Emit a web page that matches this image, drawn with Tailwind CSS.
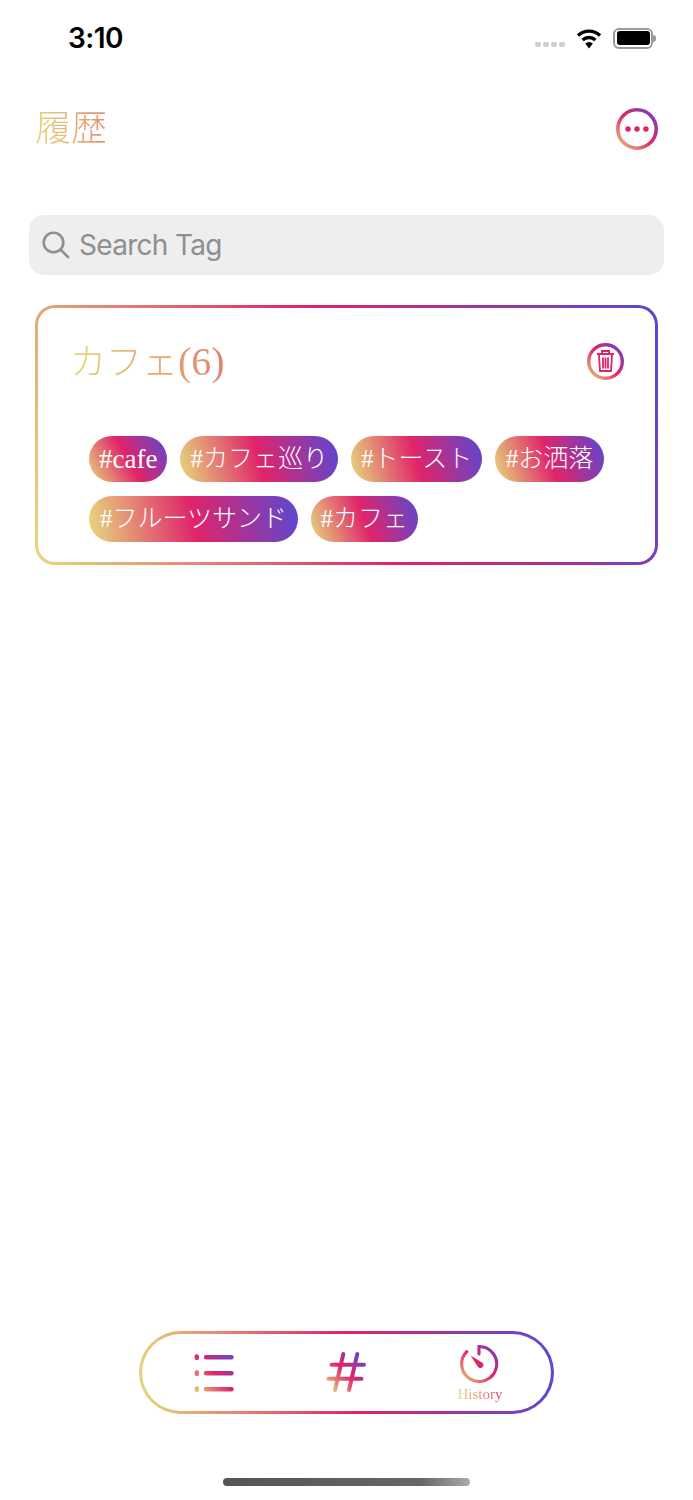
<!DOCTYPE html>
<html lang="ja">

<head>
  <meta charset="UTF-8">
  <meta name="viewport" content="width=device-width, initial-scale=1.0">
  <title>履歴</title>
  <script src="https://cdn.jsdelivr.net/npm/@tailwindcss/browser@4"></script>
</head>

<body class="bg-white">
  <!-- shared gradient for icons -->
  <svg class="absolute w-0 h-0">
    <defs>
      <linearGradient id="grad40" gradientUnits="userSpaceOnUse" x1="0" y1="40" x2="40" y2="0">
        <stop offset="0" stop-color="#e6d97c" />
        <stop offset="0.5" stop-color="#e0246a" />
        <stop offset="1" stop-color="#5a48d2" />
      </linearGradient>
    </defs>
  </svg>

  <div class="w-[693px] h-[1500px] flex flex-col overflow-hidden font-['Liberation_Serif','Noto_Sans_CJK_JP',serif]">
    <!-- Status bar -->
    <div class="h-[76px] shrink-0 flex items-center pl-[68px] pr-[37px]">
      <span class="font-['Inter',sans-serif] font-semibold text-[28px] leading-none text-black tracking-[-0.5px]">3:10</span>
      <div class="ml-auto flex items-center">
        <div class="flex gap-[2px] mt-[13px] mr-[11px]">
          <span class="w-[6px] h-[5px] rounded-[2px] bg-[#cfcfcf]"></span>
          <span class="w-[6px] h-[5px] rounded-[2px] bg-[#cfcfcf]"></span>
          <span class="w-[6px] h-[5px] rounded-[2px] bg-[#cfcfcf]"></span>
          <span class="w-[6px] h-[5px] rounded-[2px] bg-[#cfcfcf]"></span>
        </div>
        <svg class="w-[26px] h-[21px] mr-[11px]" viewBox="0 0 26 21" fill="none" stroke="#000" stroke-width="3.4">
          <path d="M2 7.5 A16 16 0 0 1 24 7.5" />
          <path d="M6.6 12 A9.5 9.5 0 0 1 19.4 12" />
          <path d="M9.2 15.5 L13 20.5 L16.8 15.5 A5.5 5.5 0 0 0 9.2 15.5 Z" fill="#000" stroke="none" />
        </svg>
        <div class="w-[40px] h-[21px] rounded-[6px] border-2 border-[#9a9a9a] p-[1.5px]">
          <div class="w-full h-full rounded-[3px] bg-black"></div>
        </div>
        <div class="w-[3px] h-[7px] rounded-r-full bg-[#9a9a9a]"></div>
      </div>
    </div>

    <!-- Header -->
    <div class="h-[42px] mt-[32px] shrink-0 flex items-center justify-between pl-[35px] pr-[35px]">
      <h1 class="w-[360px] text-[36px] leading-[42px] font-light text-transparent bg-clip-text bg-[linear-gradient(80deg,#e6d97c,#e0246a_50%,#5a48d2)]">履歴</h1>
      <svg class="w-[42px] h-[42px]" viewBox="0 0 40 40" fill="none">
        <circle cx="20" cy="20" r="18.3" stroke="url(#grad40)" stroke-width="3.4" />
        <circle cx="11.5" cy="20" r="2.6" fill="#e0246a" />
        <circle cx="20" cy="20" r="2.6" fill="#e0246a" />
        <circle cx="28.5" cy="20" r="2.6" fill="#e0246a" />
      </svg>
    </div>

    <!-- Search -->
    <div class="mx-[29px] mt-[65px] h-[60px] shrink-0 rounded-[15px] bg-[#eeeeef] flex items-center pl-[13px]">
      <svg class="w-[28px] h-[28px]" viewBox="0 0 28 28" fill="none" stroke="#8e8e93" stroke-width="2.6" stroke-linecap="round">
        <circle cx="11.5" cy="11.5" r="9.8" />
        <path d="M18.8 18.8 L26 26" />
      </svg>
      <span class="ml-[9px] font-['Inter',sans-serif] text-[28px] text-[#8e8e93] tracking-[-0.7px]">Search Tag</span>
    </div>

    <!-- Card -->
    <div class="mx-[35px] mt-[30px] h-[260px] shrink-0 rounded-[20px] p-[3px] bg-[linear-gradient(70deg,#e6d97c,#e0246a_50%,#5a48d2)]">
      <div class="w-full h-full rounded-[17px] bg-white pt-[32px] pl-[32px] pr-[31px]">
        <div class="flex items-center justify-between h-[44px]">
          <h2 class="w-[500px] text-[36px] leading-[44px] font-light text-transparent bg-clip-text bg-[linear-gradient(80deg,#e6d97c,#e0246a_65%,#5a48d2)]">カフェ<span class="text-[40px]">(6)</span></h2>
          <svg class="w-[37px] h-[37px] -mt-[2px]" viewBox="0 0 37 37" fill="none">
            <defs>
              <linearGradient id="gradTrash" gradientUnits="userSpaceOnUse" x1="0" y1="37" x2="37" y2="0">
                <stop offset="0" stop-color="#e6d97c" />
                <stop offset="0.5" stop-color="#e0246a" />
                <stop offset="1" stop-color="#5a48d2" />
              </linearGradient>
            </defs>
            <circle cx="18.5" cy="18.5" r="16.8" stroke="url(#gradTrash)" stroke-width="3.4" />
            <path d="M10 11 H27 M15 10.5 V8 H22 V10.5" stroke="#e0246a" stroke-width="2" />
            <path d="M12 12 L13 28 H24 L25 12 M16 14.5 V25.5 M18.5 14.5 V25.5 M21 14.5 V25.5" stroke="#e0246a" stroke-width="1.8" />
          </svg>
        </div>

        <div class="flex flex-wrap gap-x-[13px] gap-y-[14px] mt-[52px] ml-[19px] w-[530px]">
          <span class="h-[46px] px-[10px] rounded-full flex items-center text-white text-[27px] bg-[linear-gradient(60deg,#e6d97c,#e0246a_50%,#5a48d2)]">#cafe</span>
          <span class="h-[46px] px-[10px] rounded-full flex items-center text-white text-[25px] font-light bg-[linear-gradient(75deg,#e6d97c,#e0246a_50%,#5a48d2)]">#カフェ巡り</span>
          <span class="h-[46px] px-[10px] rounded-full flex items-center text-white text-[25px] font-light bg-[linear-gradient(75deg,#e6d97c,#e0246a_50%,#5a48d2)]">#トースト</span>
          <span class="h-[46px] px-[10.5px] rounded-full flex items-center text-white text-[25px] font-light bg-[linear-gradient(70deg,#e6d97c,#e0246a_50%,#5a48d2)]">#お洒落</span>
          <span class="h-[46px] px-[11px] rounded-full flex items-center text-white text-[25px] font-light bg-[linear-gradient(80deg,#e6d97c,#e0246a_50%,#5a48d2)]">#フルーツサンド</span>
          <span class="h-[46px] px-[9.5px] rounded-full flex items-center text-white text-[25px] font-light bg-[linear-gradient(70deg,#e6d97c,#e0246a_50%,#5a48d2)]">#カフェ</span>
        </div>
      </div>
    </div>

    <!-- Bottom nav -->
    <div class="mt-auto mx-[139px] w-[415px] h-[83px] shrink-0 rounded-full p-[3px] bg-[linear-gradient(80deg,#e6d97c,#e0246a_50%,#5a48d2)]">
      <div class="w-full h-full rounded-full bg-white flex items-center pl-[52px]">
        <svg class="w-[40px] h-[40px]" viewBox="0 0 40 40" fill="none" stroke="url(#grad40)" stroke-width="4.5" stroke-linecap="round">
          <path d="M2.8 3.4 V5 M12 4.2 H37.5" />
          <path d="M2.8 19.4 V21 M12 20.2 H37.5" />
          <path d="M2.8 35.4 V37 M12 36.2 H37.5" />
        </svg>
        <svg class="w-[45px] h-[45px] ml-[91px]" viewBox="0 0 45 45" fill="none" stroke-width="4" stroke-linecap="round">
          <defs>
            <linearGradient id="gradHash" gradientUnits="userSpaceOnUse" x1="3" y1="41" x2="39" y2="4">
              <stop offset="0" stop-color="#e6d97c" />
              <stop offset="0.5" stop-color="#e0246a" />
              <stop offset="1" stop-color="#5a48d2" />
            </linearGradient>
          </defs>
          <path stroke="url(#gradHash)" d="M18.3 4 L10 40 M32.3 4 L24 40 M6.5 14.7 H39 M3.5 28.7 H36.5" />
        </svg>
        <div class="w-[46px] ml-[87px] flex flex-col items-center">
          <svg class="w-[40px] h-[40px]" viewBox="0 0 40 40" fill="none">
            <path d="M19 10 V2.5 A17.5 17.5 0 1 1 6.8 7.6" stroke="url(#grad40)" stroke-width="3.2" stroke-linecap="round" />
            <path d="M10.5 11.5 L22.5 18.8 A3 3 0 0 1 18 23 Z" fill="#e0246a" />
          </svg>
          <span class="text-[15px] leading-[16px] mt-[2px] text-transparent bg-clip-text bg-[linear-gradient(90deg,#e6d97c,#e0246a_120%)]">History</span>
        </div>
      </div>
    </div>

    <!-- Home indicator -->
    <div class="mt-[64px] mb-[14px] mx-[223px] h-[8px] shrink-0 rounded-full bg-[linear-gradient(90deg,#555_0%,#666_80%,#aaa_100%)]"></div>
  </div>
</body>

</html>
